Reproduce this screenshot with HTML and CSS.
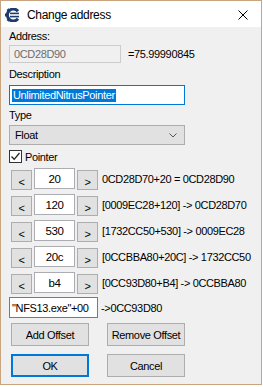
FILE: index.html
```html
<!DOCTYPE html>
<html lang="en">
<head>
  <meta charset="UTF-8">
  <title>Change address</title>
  <link rel="stylesheet" href="styles.css">
</head>
<body>
  <div class="window">
    <div class="titlebar">
      <svg class="app-icon" width="16" height="14" viewBox="0 0 16 14">
        <!-- gear shaped C logo -->
        <path d="M13 3.2 A6 6 0 1 0 13 10.8" fill="none" stroke="#1d3b6b" stroke-width="3"/>
        <rect x="0" y="5.5" width="3" height="3" fill="#1d3b6b"/>
        <rect x="2" y="1" width="2.5" height="2.5" fill="#1d3b6b" transform="rotate(-40 3 2)"/>
        <rect x="2" y="10.5" width="2.5" height="2.5" fill="#1d3b6b" transform="rotate(40 3 12)"/>
        <rect x="5" y="4.6" width="9" height="1.6" fill="#1d3b6b"/>
        <rect x="5" y="7.8" width="9" height="1.6" fill="#1d3b6b"/>
      </svg>
      <span class="title">Change address</span>
      <svg class="close" width="10" height="10" viewBox="0 0 10 10">
        <path d="M0.5 0.5 L9.5 9.5 M9.5 0.5 L0.5 9.5" stroke="#000" stroke-width="1"/>
      </svg>
    </div>

    <div class="content">
      <div class="label lbl-address">Address:</div>
      <div class="address-row">
        <div class="field disabled">0CD28D90</div>
        <span class="value">=75.99990845</span>
      </div>

      <div class="label lbl-desc">Description</div>
      <div class="field desc"><span class="selected">UnlimitedNitrusPointer</span></div>

      <div class="label lbl-type">Type</div>
      <div class="select">
        <span>Float</span>
        <svg width="8" height="5" viewBox="0 0 8 5">
          <path d="M0.5 0.5 L4 4 L7.5 0.5" fill="none" stroke="#555" stroke-width="1"/>
        </svg>
      </div>

      <div class="check-row">
        <span class="checkbox">
          <svg width="11" height="11" viewBox="0 0 11 11">
            <path d="M1.5 5.5 L4.2 8.3 L9.5 2" fill="none" stroke="#222" stroke-width="1.3"/>
          </svg>
        </span>
        <span>Pointer</span>
      </div>

      <div class="offsets">
        <div class="offset-row">
          <button class="arrow">&lt;</button>
          <div class="field offset">20</div>
          <button class="arrow">&gt;</button>
          <span class="result">0CD28D70+20 = 0CD28D90</span>
        </div>
        <div class="offset-row">
          <button class="arrow">&lt;</button>
          <div class="field offset">120</div>
          <button class="arrow">&gt;</button>
          <span class="result">[0009EC28+120] -&gt; 0CD28D70</span>
        </div>
        <div class="offset-row">
          <button class="arrow">&lt;</button>
          <div class="field offset">530</div>
          <button class="arrow">&gt;</button>
          <span class="result">[1732CC50+530] -&gt; 0009EC28</span>
        </div>
        <div class="offset-row">
          <button class="arrow">&lt;</button>
          <div class="field offset">20c</div>
          <button class="arrow">&gt;</button>
          <span class="result">[0CCBBA80+20C] -&gt; 1732CC50</span>
        </div>
        <div class="offset-row">
          <button class="arrow">&lt;</button>
          <div class="field offset">b4</div>
          <button class="arrow">&gt;</button>
          <span class="result">[0CC93D80+B4] -&gt; 0CCBBA80</span>
        </div>
      </div>

      <div class="base-row">
        <div class="field base">"NFS13.exe"+00</div>
        <span class="result">-&gt;0CC93D80</span>
      </div>

      <div class="btn-row first">
        <button class="btn">Add Offset</button>
        <button class="btn">Remove Offset</button>
      </div>
      <div class="btn-row second">
        <button class="btn default">OK</button>
        <button class="btn">Cancel</button>
      </div>
    </div>
  </div>
</body>
</html>
```

FILE: styles.css
```css
html, body {
  margin: 0;
  padding: 0;
  background: #fff;
}
body {
  font-family: "Liberation Sans", Arial, sans-serif;
  font-size: 11px;
  letter-spacing: -0.35px;
  color: #000;
}
.window {
  width: 260px;
  height: 383px;
  border: 1px solid #c9a57f;
  background: #f0f0f0;
  display: flex;
  flex-direction: column;
}
.titlebar {
  height: 26px;
  background: #fff;
  display: flex;
  align-items: center;
  padding-left: 4px;
}
.app-icon {
  margin-top: 2px;
}
.title {
  font-size: 12px;
  letter-spacing: -0.3px;
  margin-left: 6px;
  margin-top: 1px;
}
.close {
  margin-left: auto;
  margin-right: 13px;
  margin-top: 1px;
}
.content {
  padding-left: 8px;
}
.label {
  height: 13px;
  line-height: 13px;
}
.lbl-address {
  margin-top: 3px;
}
.field {
  box-sizing: border-box;
  background: #fff;
  border: 1px solid #abadb3;
  display: flex;
  align-items: center;
  padding-left: 3px;
  white-space: nowrap;
}
.address-row {
  margin-top: 2px;
  display: flex;
  align-items: center;
}
.disabled {
  width: 112px;
  height: 18px;
  background: #f0f0f0;
  border-color: #cccccc;
  color: #6d6d6d;
  padding-left: 4px;
}
.value {
  margin-left: 7px;
}
.lbl-desc {
  margin-top: 5px;
}
.desc {
  margin-top: 4px;
  width: 176px;
  height: 20px;
  border-color: #0078d7;
  padding-left: 2px;
}
.selected {
  background: #0078d7;
  color: #fff;
  line-height: 13px;
  padding: 0 1px;
}
.lbl-type {
  margin-top: 4px;
}
.select {
  box-sizing: border-box;
  margin-top: 3px;
  width: 176px;
  height: 20px;
  background: #e1e1e1;
  border: 1px solid #adadad;
  display: flex;
  align-items: center;
  justify-content: space-between;
  padding: 0 7px 0 5px;
}
.check-row {
  margin-top: 5px;
  display: flex;
  align-items: center;
  height: 13px;
}
.checkbox {
  box-sizing: border-box;
  width: 13px;
  height: 13px;
  border: 1px solid #333;
  background: #fff;
  display: flex;
  margin-right: 3px;
}
.offsets {
  margin-top: 5px;
  display: flex;
  flex-direction: column;
  gap: 5px;
}
.offset-row {
  display: flex;
  align-items: center;
  height: 21px;
}
button {
  font-family: inherit;
  font-size: 11px;
  letter-spacing: -0.35px;
  box-sizing: border-box;
  background: #e1e1e1;
  border: 1px solid #adadad;
  color: #000;
  padding: 0;
  cursor: pointer;
}
.arrow {
  width: 21px;
  height: 20px;
  margin-top: 2px;
  padding-top: 4px;
}
.arrow:first-child {
  margin-left: 2px;
}
.offset {
  width: 41px;
  height: 21px;
  margin: 0 2px;
  justify-content: center;
  padding-left: 0;
  font-size: 11.5px;
}
.result {
  margin-left: 4px;
}
.base-row {
  margin-top: 4px;
  display: flex;
  align-items: center;
}
.base {
  width: 89px;
  height: 21px;
  border-color: #7a7a7a;
  padding-left: 2px;
}
.base + .result {
  margin-left: 3px;
}
.btn-row {
  display: flex;
  gap: 18px;
  padding-left: 2px;
}
.btn-row.first {
  margin-top: 5px;
}
.btn-row.second {
  margin-top: 8px;
}
.btn {
  width: 78px;
  height: 23px;
}
.btn.default {
  border: 2px solid #0078d7;
}
```
